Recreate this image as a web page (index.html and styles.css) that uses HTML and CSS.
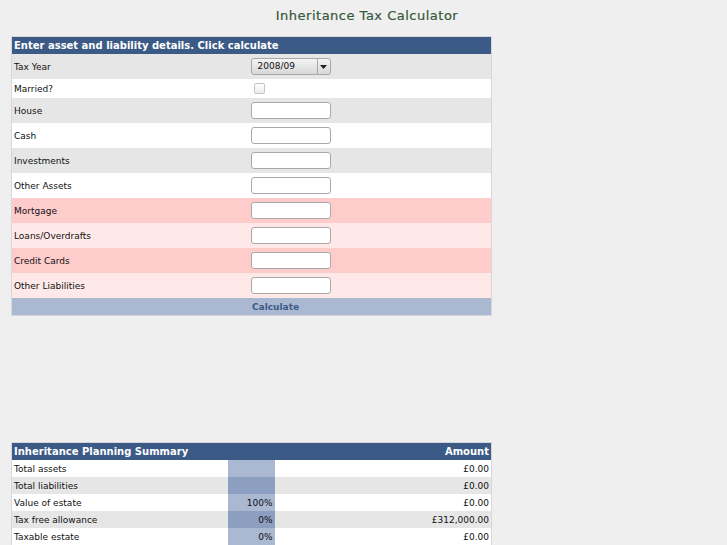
FILE: index.html
```html
<!DOCTYPE html>
<html>
<head>
<meta charset="utf-8">
<link rel="stylesheet" href="styles.css">
</head>
<body>
<h1 class="title">Inheritance Tax Calculator</h1>
<table class="form">
  <colgroup><col class="c1"><col class="c2"><col></colgroup>
  <tr class="head"><th colspan="3">Enter asset and liability details. Click calculate</th></tr>
  <tr class="gray tall"><td class="lbl">Tax Year</td><td class="ctl"><div class="select"><span class="sval">2008/09</span><span class="sbtn"><svg width="7" height="4" viewBox="0 0 7 4"><path d="M0 0H7L3.5 4Z" fill="#222"/></svg></span></div></td><td></td></tr>
  <tr class="white short"><td class="lbl">Married?</td><td class="ctl"><span class="check"></span></td><td></td></tr>
  <tr class="gray tall"><td class="lbl">House</td><td class="ctl"><span class="input"></span></td><td></td></tr>
  <tr class="white tall"><td class="lbl">Cash</td><td class="ctl"><span class="input"></span></td><td></td></tr>
  <tr class="gray tall"><td class="lbl">Investments</td><td class="ctl"><span class="input"></span></td><td></td></tr>
  <tr class="white tall"><td class="lbl">Other Assets</td><td class="ctl"><span class="input"></span></td><td></td></tr>
  <tr class="pink tall"><td class="lbl">Mortgage</td><td class="ctl"><span class="input"></span></td><td></td></tr>
  <tr class="lpink tall"><td class="lbl">Loans/Overdrafts</td><td class="ctl"><span class="input"></span></td><td></td></tr>
  <tr class="pink tall"><td class="lbl">Credit Cards</td><td class="ctl"><span class="input"></span></td><td></td></tr>
  <tr class="lpink tall"><td class="lbl">Other Liabilities</td><td class="ctl"><span class="input"></span></td><td></td></tr>
  <tr class="calc"><td colspan="3"><span class="calc-btn">Calculate</span></td></tr>
</table>

<table class="summary">
  <colgroup><col class="k1"><col class="k2"><col></colgroup>
  <tr class="head"><th class="s1">Inheritance Planning Summary</th><th class="s2"></th><th class="s3">Amount</th></tr>
  <tr class="white"><td class="s1">Total assets</td><td class="s2"></td><td class="s3">£0.00</td></tr>
  <tr class="gray"><td class="s1">Total liabilities</td><td class="s2"></td><td class="s3">£0.00</td></tr>
  <tr class="white"><td class="s1">Value of estate</td><td class="s2">100%</td><td class="s3">£0.00</td></tr>
  <tr class="gray"><td class="s1">Tax free allowance</td><td class="s2">0%</td><td class="s3">£312,000.00</td></tr>
  <tr class="white"><td class="s1">Taxable estate</td><td class="s2">0%</td><td class="s3">£0.00</td></tr>
  <tr class="pink"><td class="s1"></td><td class="s2"></td><td class="s3"></td></tr>
</table>
</body>
</html>
```
FILE: styles.css
```css
html, body {
  margin: 0;
  padding: 0;
  background: #efefef;
  font-family: "DejaVu Sans", Verdana, sans-serif;
  overflow: hidden;
}
body {
  padding: 0 0 0 11px;
  height: 545px;
}
.title {
  margin: 0;
  padding: 8px 4px 0 0;
  height: 28px;
  box-sizing: border-box;
  font-size: 13px;
  font-weight: normal;
  color: #35573a;
  text-align: center;
  letter-spacing: 0.5px;
  -webkit-text-stroke: 0.2px #35573a;
}
table {
  border-collapse: collapse;
  table-layout: fixed;
  width: 481px;
  border: 1px solid #d6d6dc;
  font-size: 9px;
  color: #111;
}
.form { margin-top: 8px; }
.c1 { width: 239px; }
.c2 { width: 84px; }
.k1 { width: 216px; }
.k2 { width: 47px; }
td, th { padding: 0; white-space: nowrap; }
.head th {
  background: #3b5a86;
  color: #fff;
  font-size: 10px;
  font-weight: bold;
  text-align: left;
  height: 17px;
  padding: 0 2px;
}
.gray { background: #e6e6e6; }
.white { background: #fff; }
.pink { background: #ffcccc; }
.lpink { background: #ffe8e8; }
.tall td { height: 25px; }
.short td { height: 19px; }
.lbl { padding-left: 2px; }
.input {
  display: block;
  width: 78px;
  height: 15px;
  border: 1px solid #a9a9a9;
  border-radius: 3px;
  background: #fff;
}
.select {
  display: flex;
  width: 78px;
  height: 15px;
  border: 1px solid #a8a8a8;
  border-radius: 3px;
  background: linear-gradient(#f4f4f4, #d8d8d8);
  font-size: 9px;
  line-height: 15px;
}
.sval { flex: 1; padding-left: 6px; }
.sbtn {
  width: 12px;
  border-left: 1px solid #a8a8a8;
  display: flex;
  align-items: center;
  justify-content: center;
}
.check {
  display: block;
  width: 9px;
  height: 9px;
  margin-left: 3px;
  border: 1px solid #c4c4c4;
  border-radius: 2px;
  background: linear-gradient(#fff, #ececec);
}
.calc td {
  background: #aab8d1;
  color: #3b5a86;
  font-weight: bold;
  height: 17px;
  font-size: 9px;
  padding-left: 240px;
}
.summary { margin-top: 126px; }
.summary td { height: 17px; }
.summary .s1 { padding-left: 2px; }
.summary .s2 { text-align: right; padding-right: 2px; }
.summary .s3 { text-align: right; padding-right: 2px; }
.summary .head th.s3 { text-align: right; padding-right: 2px; }
.summary .white .s2 { background: #aab8d1; }
.summary .gray .s2 { background: #8d9fc0; }
.summary .head .s2 { background: #3b5a86; }
.summary .pink .s2 { background: #c8a8c0; }
```
